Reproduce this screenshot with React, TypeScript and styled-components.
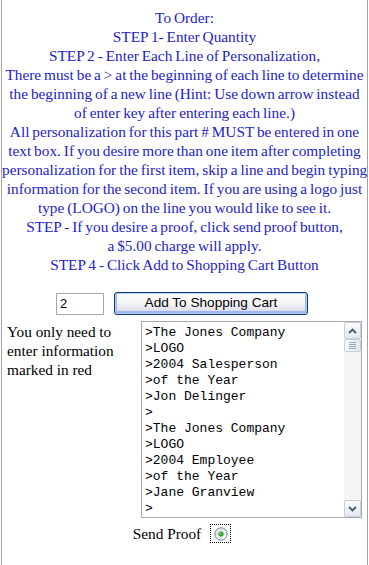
import React from "react";
import styled, { createGlobalStyle } from "styled-components";

const GlobalStyle = createGlobalStyle`
    body {
        margin: 0;
        background: #ffffff;
    }
`

const Frame = styled.div`
    box-sizing: border-box;
    margin-left: 1px;
    width: 367px;
    height: 565px;
    border-left: 1px solid #a3a3a3;
    border-right: 1px solid #a3a3a3;
    font-family: "Liberation Serif", "Times New Roman", serif;
    font-size: 15.3px;
    line-height: 19px;
    color: #000;
`

const Instructions = styled.div`
    padding-top: 8px;
    text-align: center;
    word-spacing: -0.9px;
    color: #2323c6;
`

const Line = styled.div`
    white-space: nowrap;
`

const OrderRow = styled.div`
    display: flex;
    align-items: center;
    gap: 10px;
    margin-top: 18px;
    padding-left: 54px;
`

const QtyInput = styled.input`
    box-sizing: border-box;
    width: 48px;
    height: 22px;
    padding: 0 3px;
    border: 1px solid #a7a7a7;
    font-family: "Liberation Sans", Arial, sans-serif;
    font-size: 13px;
    color: #000;
    outline: none;
`

const CartButton = styled.button`
    box-sizing: border-box;
    width: 194px;
    height: 23px;
    padding: 0 0 2px;
    border: 1px solid #0a3c7c;
    border-radius: 3px;
    background: linear-gradient(#ffffff 0%, #f6f6f8 45%, #e4e2ee 80%, #cdc9df 100%);
    box-shadow: inset 0 0 0 1px #b9cdf4, inset 0 -1px 0 2px #9db7ee;
    font-family: "Liberation Sans", Arial, sans-serif;
    font-size: 13.6px;
    color: #000;
    cursor: pointer;
`

const DetailRow = styled.div`
    display: flex;
    align-items: flex-start;
    margin-top: 6px;
`

const Note = styled.div`
    box-sizing: border-box;
    width: 139px;
    padding: 1px 8px 0 5px;
`

const TextBox = styled.div`
    box-sizing: border-box;
    display: flex;
    width: 221px;
    height: 197px;
    border: 1px solid #a6aab0;
    background: #fff;
`

const Lines = styled.textarea`
    flex: 1;
    margin: 0;
    padding: 3px 3px 0;
    border: none;
    outline: none;
    resize: none;
    overflow: hidden;
    font-family: "Liberation Mono", "Courier New", monospace;
    font-size: 13px;
    line-height: 16px;
    color: #000;
`

const ScrollTrack = styled.div`
    display: flex;
    flex-direction: column;
    width: 17px;
    background: #f5f5f2;
`

const ScrollButton = styled.div`
    box-sizing: border-box;
    display: flex;
    align-items: center;
    justify-content: center;
    width: 17px;
    height: 17px;
    border: 1px solid #c8cfdb;
    border-radius: 2px;
    background: linear-gradient(#fbfbfd, #e4e8f0);
`

const Thumb = styled.div`
    box-sizing: border-box;
    display: flex;
    flex-direction: column;
    align-items: center;
    justify-content: center;
    gap: 1px;
    width: 17px;
    height: 13px;
    border: 1px solid #c8cfdb;
    border-radius: 2px;
    background: linear-gradient(90deg, #f7f8fb, #e6e9f0);
`

const Grip = styled.span`
    display: block;
    width: 7px;
    height: 1px;
    background: #9aa5b8;
`

const Spacer = styled.div`
    flex: 1;
`

const ProofRow = styled.div`
    display: flex;
    align-items: center;
    justify-content: center;
    gap: 9px;
    margin-top: 6px;
    padding-right: 5px;
`

const FocusRing = styled.span`
    display: flex;
    align-items: center;
    justify-content: center;
    width: 21px;
    height: 19px;
    outline: 1px dotted #000;
    outline-offset: -1px;
`

const Chevron = ({ up }: { up: boolean }) => (
    <svg width="9" height="6" viewBox="0 0 9 6">
        <path
            d={up ? "M1 5 L4.5 1.5 L8 5" : "M1 1 L4.5 4.5 L8 1"}
            fill="none"
            stroke="#4a5670"
            strokeWidth="1.8"
        />
    </svg>
)

const Radio = () => (
    <svg width="14" height="14" viewBox="0 0 14 14">
        <defs>
            <linearGradient id="rb" x1="0" y1="0" x2="1" y2="1">
                <stop offset="0" stopColor="#dcdcd6" />
                <stop offset="1" stopColor="#ffffff" />
            </linearGradient>
        </defs>
        <circle cx="7" cy="7" r="6.2" fill="url(#rb)" stroke="#6f8aa8" strokeWidth="1" />
        <circle cx="7" cy="7" r="2.6" fill="#2ea52e" />
        <circle cx="6.4" cy="6.4" r="1" fill="#8fdc8f" />
    </svg>
)

const personalization = [
    ">The Jones Company",
    ">LOGO",
    ">2004 Salesperson",
    ">of the Year",
    ">Jon Delinger",
    ">",
    ">The Jones Company",
    ">LOGO",
    ">2004 Employee",
    ">of the Year",
    ">Jane Granview",
    ">",
].join("\n");

const steps = [
    "To Order:",
    "STEP 1- Enter Quantity",
    "STEP 2 - Enter Each Line of Personalization,",
    "There must be a > at the beginning of each line to determine",
    "the beginning of a new line (Hint: Use down arrow instead",
    "of enter key after entering each line.)",
    "All personalization for this part # MUST be entered in one",
    "text box. If you desire more than one item after completing",
    "personalization for the first item, skip a line and begin typing",
    "information for the second item. If you are using a logo just",
    "type (LOGO) on the line you would like to see it.",
    "STEP - If you desire a proof, click send proof button,",
    "a $5.00 charge will apply.",
    "STEP 4 - Click Add to Shopping Cart Button",
];

const App = (): JSX.Element => {
    return (
        <>
        <GlobalStyle />
        <Frame>
            <Instructions>
                {steps.map((s, i) => <Line key={i}>{s}</Line>)}
            </Instructions>
            <OrderRow>
                <QtyInput defaultValue="2" />
                <CartButton>Add To Shopping Cart</CartButton>
            </OrderRow>
            <DetailRow>
                <Note>You only need to enter information marked in red</Note>
                <TextBox>
                    <Lines defaultValue={personalization} spellCheck={false} />
                    <ScrollTrack>
                        <ScrollButton><Chevron up /></ScrollButton>
                        <Thumb><Grip /><Grip /><Grip /><Grip /></Thumb>
                        <Spacer />
                        <ScrollButton><Chevron up={false} /></ScrollButton>
                    </ScrollTrack>
                </TextBox>
            </DetailRow>
            <ProofRow>
                Send Proof
                <FocusRing><Radio /></FocusRing>
            </ProofRow>
        </Frame>
        </>
    )
}

export default App;
